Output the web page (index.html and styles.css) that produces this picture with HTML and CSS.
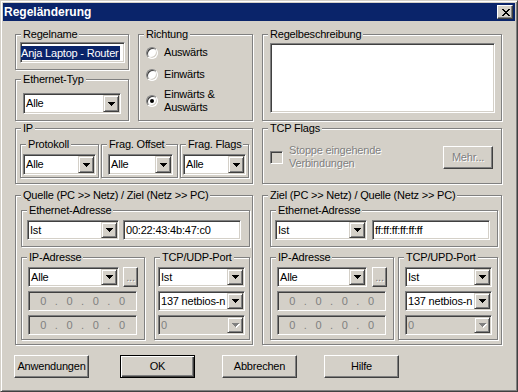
FILE: index.html
```html
<!DOCTYPE html>
<html lang="de">
<head>
    <meta charset="UTF-8">
    <link rel="stylesheet" href="styles.css">
</head>
<body>
<div class="window">
    <div class="titlebar">
        <span class="title">Regeländerung</span>
        <div class="close-btn">
            <svg width="8" height="7" viewBox="0 0 8 7" shape-rendering="crispEdges"><path d="M0 0h2v1H0zM6 0h2v1H6zM1 1h2v1H1zM5 1h2v1H5zM2 2h4v1H2zM3 3h2v1H3zM2 4h4v1H2zM1 5h2v1H1zM5 5h2v1H5zM0 6h2v1H0zM6 6h2v1H6z"/></svg>
        </div>
    </div>

    <div class="content">
        <!-- name, direction, description -->
        <div class="row">
            <div class="stack">
                <div class="group g-name">
                    <div class="group-title">Regelname</div>
                    <div class="edit e-name"><span class="sel">Anja Laptop - Router</span></div>
                </div>
                <div class="group g-ethtype">
                    <div class="group-title">Ethernet-Typ</div>
                    <div class="combo c-ethtype"><span class="combo-text">Alle</span><span class="drop"></span></div>
                </div>
            </div>
            <div class="group g-dir">
                <div class="group-title">Richtung</div>
                <div class="radio r-out"><span class="radio-dot"></span><span>Auswärts</span></div>
                <div class="radio r-in"><span class="radio-dot"></span><span>Einwärts</span></div>
                <div class="radio r-both"><span class="radio-dot checked"></span><span>Einwärts &amp;<br>Auswärts</span></div>
            </div>
            <div class="group g-desc">
                <div class="group-title">Regelbeschreibung</div>
                <div class="edit e-desc"></div>
            </div>
        </div>

        <!-- IP / TCP flags -->
        <div class="row row-ip">
            <div class="group g-ip">
                <div class="group-title">IP</div>
                <div class="ip-subs">
                    <div class="group g-proto">
                        <div class="group-title">Protokoll</div>
                        <div class="combo c-proto"><span class="combo-text">Alle</span><span class="drop"></span></div>
                    </div>
                    <div class="group g-offset">
                        <div class="group-title">Frag. Offset</div>
                        <div class="combo c-offset"><span class="combo-text">Alle</span><span class="drop"></span></div>
                    </div>
                    <div class="group g-flags">
                        <div class="group-title">Frag. Flags</div>
                        <div class="combo c-flags"><span class="combo-text">Alle</span><span class="drop"></span></div>
                    </div>
                </div>
            </div>
            <div class="group g-tcp">
                <div class="group-title">TCP Flags</div>
                <div class="tcp-row">
                    <span class="checkbox"></span>
                    <span class="disabled-text tcp-label">Stoppe eingehende<br>Verbindungen</span>
                    <div class="btn btn-more disabled-text">Mehr...</div>
                </div>
            </div>
        </div>

        <!-- source / destination -->
        <div class="row row-addr">
            <div class="group g-addr">
                <div class="group-title">Quelle (PC &gt;&gt; Netz) / Ziel (Netz &gt;&gt; PC)</div>
                <div class="group g-eth src">
                    <div class="group-title">Ethernet-Adresse</div>
                    <div class="eth-row">
                        <div class="combo c-eth"><span class="combo-text">Ist</span><span class="drop"></span></div>
                        <div class="edit e-mac">00:22:43:4b:47:c0</div>
                    </div>
                </div>
                <div class="sub-row src">
                    <div class="group g-ipaddr">
                        <div class="group-title">IP-Adresse</div>
                        <div class="ipaddr-row">
                            <div class="combo c-ipaddr"><span class="combo-text">Alle</span><span class="drop"></span></div>
                            <div class="btn btn-dots disabled-text">...</div>
                        </div>
                        <div class="ip-field"><span>0</span><i>.</i><span>0</span><i>.</i><span>0</span><i>.</i><span>0</span></div>
                        <div class="ip-field"><span>0</span><i>.</i><span>0</span><i>.</i><span>0</span><i>.</i><span>0</span></div>
                    </div>
                    <div class="group g-port">
                        <div class="group-title">TCP/UDP-Port</div>
                        <div class="combo c-port"><span class="combo-text">Ist</span><span class="drop"></span></div>
                        <div class="combo c-port"><span class="combo-text">137 netbios-n</span><span class="drop"></span></div>
                        <div class="combo c-port disabled"><span class="combo-text">0</span><span class="drop"></span></div>
                    </div>
                </div>
            </div>
            <div class="group g-addr dst">
                <div class="group-title">Ziel (PC &gt;&gt; Netz) / Quelle (Netz &gt;&gt; PC)</div>
                <div class="group g-eth">
                    <div class="group-title">Ethernet-Adresse</div>
                    <div class="eth-row">
                        <div class="combo c-eth"><span class="combo-text">Ist</span><span class="drop"></span></div>
                        <div class="edit e-mac">ff:ff:ff:ff:ff:ff</div>
                    </div>
                </div>
                <div class="sub-row">
                    <div class="group g-ipaddr">
                        <div class="group-title">IP-Adresse</div>
                        <div class="ipaddr-row">
                            <div class="combo c-ipaddr"><span class="combo-text">Alle</span><span class="drop"></span></div>
                            <div class="btn btn-dots disabled-text">...</div>
                        </div>
                        <div class="ip-field"><span>0</span><i>.</i><span>0</span><i>.</i><span>0</span><i>.</i><span>0</span></div>
                        <div class="ip-field"><span>0</span><i>.</i><span>0</span><i>.</i><span>0</span><i>.</i><span>0</span></div>
                    </div>
                    <div class="group g-port">
                        <div class="group-title">TCP/UPD-Port</div>
                        <div class="combo c-port"><span class="combo-text">Ist</span><span class="drop"></span></div>
                        <div class="combo c-port"><span class="combo-text">137 netbios-n</span><span class="drop"></span></div>
                        <div class="combo c-port disabled"><span class="combo-text">0</span><span class="drop"></span></div>
                    </div>
                </div>
            </div>
        </div>

        <div class="buttons">
            <div class="btn btn-main">Anwendungen</div>
            <div class="btn btn-main btn-default">OK</div>
            <div class="btn btn-main">Abbrechen</div>
            <div class="btn btn-main">Hilfe</div>
        </div>
    </div>
</div>
</body>
</html>
```

FILE: styles.css
```css
* {
    box-sizing: border-box;
}
body {
    margin: 0;
    background: #d4d0c8;
    font-family: "Liberation Sans", Arial, sans-serif;
    font-size: 11px;
    letter-spacing: -0.2px;
    line-height: 13px;
    color: #000;
}

/* window frame */
.window {
    width: 518px;
    height: 392px;
    padding: 2px;
    background: #d4d0c8;
    border: 1px solid;
    border-color: #d4d0c8 #404040 #404040 #d4d0c8;
    box-shadow: inset 1px 1px #fff, inset -1px -1px #808080;
}
.titlebar {
    height: 18px;
    padding: 0 2px 0 1px;
    background: #0a246a;
    display: flex;
    align-items: center;
    justify-content: space-between;
}
.title {
    color: #fff;
    font-weight: bold;
    font-size: 12px;
    letter-spacing: 0;
}
.close-btn {
    width: 16px;
    height: 14px;
    background: #d4d0c8;
    border: 1px solid;
    border-color: #fff #404040 #404040 #fff;
    box-shadow: inset -1px -1px #808080;
    display: flex;
    align-items: center;
    justify-content: center;
    padding-left: 1px;
}

.content {
    padding: 13px 0 0 12px;
}
.row {
    display: flex;
    align-items: flex-start;
}
.row-ip {
    margin-top: 7px;
}
.row-addr {
    margin-top: 11px;
}

/* etched group boxes */
.group {
    border: 1px solid #808080;
    box-shadow: inset 1px 1px #fff, 1px 1px #fff;
}
.group-title {
    width: max-content;
    height: 13px;
    margin: -7px 0 0 5px;
    padding: 0 2px;
    background: #d4d0c8;
    white-space: nowrap;
}

/* sunken controls */
.edit, .combo, .ip-field {
    border: 1px solid;
    border-color: #808080 #fff #fff #808080;
    box-shadow: inset 1px 1px #404040, inset -1px -1px #d4d0c8;
    padding: 1px;
    background: #fff;
    display: flex;
    align-items: center;
    white-space: nowrap;
}
.edit {
    padding: 1px 2px;
}
.combo {
    height: 20px;
}
.combo-text {
    flex: 1;
    overflow: hidden;
    padding-left: 1px;
}
.drop {
    width: 16px;
    align-self: stretch;
    flex-shrink: 0;
    background: #d4d0c8;
    border: 1px solid;
    border-color: #d4d0c8 #404040 #404040 #d4d0c8;
    box-shadow: inset 1px 1px #fff, inset -1px -1px #808080;
    display: flex;
    align-items: center;
    justify-content: center;
}
.drop::after {
    content: "";
    width: 7px;
    height: 4px;
    margin-left: 1px;
    background:
        linear-gradient(#000, #000) 0 0 / 7px 1px no-repeat,
        linear-gradient(#000, #000) 1px 1px / 5px 1px no-repeat,
        linear-gradient(#000, #000) 2px 2px / 3px 1px no-repeat,
        linear-gradient(#000, #000) 3px 3px / 1px 1px no-repeat;
}
.combo.disabled {
    background: #d4d0c8;
    color: #808080;
}
.combo.disabled .drop::after {
    background:
        linear-gradient(#808080, #808080) 0 0 / 7px 1px no-repeat,
        linear-gradient(#808080, #808080) 1px 1px / 5px 1px no-repeat,
        linear-gradient(#808080, #808080) 2px 2px / 3px 1px no-repeat,
        linear-gradient(#808080, #808080) 3px 3px / 1px 1px no-repeat;
    filter: drop-shadow(1px 1px 0 #fff);
}

/* raised buttons */
.btn {
    background: #d4d0c8;
    border: 1px solid;
    border-color: #fff #404040 #404040 #fff;
    box-shadow: inset -1px -1px #808080;
    display: flex;
    align-items: center;
    justify-content: center;
    white-space: nowrap;
}
.disabled-text {
    color: #808080;
    text-shadow: 1px 1px #fff;
}
.btn-main {
    width: 75px;
    height: 23px;
    margin-left: 27px;
}
.btn-main:first-child {
    margin-left: 0;
}
.btn-default {
    margin-left: 31px;
    border-color: #000;
    box-shadow: inset 1px 1px #fff, inset -1px -1px #404040, inset -2px -2px #808080;
}
.buttons {
    display: flex;
    margin: 10px 0 0 -1px;
}

/* row 1 */
.stack {
    width: 114px;
    margin-right: 9px;
}
.g-name {
    height: 36px;
}
.e-name {
    width: 105px;
    height: 21px;
    margin: 1px 0 0 4px;
    padding: 1px 0;
}
.sel {
    background: #0a246a;
    color: #fff;
    line-height: 14px;
    height: 14px;
    padding-right: 1px;
}
.g-ethtype {
    height: 42px;
    margin-top: 9px;
}
.c-ethtype {
    width: 98px;
    height: 21px;
    margin: 7px 0 0 7px;
}
.g-dir {
    width: 115px;
    height: 87px;
    margin-right: 9px;
}
.radio {
    display: flex;
    align-items: center;
    margin-left: 7px;
}
.r-out {
    margin-top: 5px;
}
.r-in {
    margin-top: 9px;
}
.r-both {
    margin-top: 7px;
}
.radio-dot {
    width: 12px;
    height: 12px;
    margin-right: 6px;
    border-radius: 50%;
    border: 1px solid;
    border-color: #808080 #fff #fff #808080;
    box-shadow: inset 1px 1px #404040, inset -1px -1px #d4d0c8;
    background: #fff;
    display: flex;
    align-items: center;
    justify-content: center;
    flex-shrink: 0;
}
.radio-dot.checked::after {
    content: "";
    width: 4px;
    height: 4px;
    border-radius: 50%;
    background: #000;
}
.g-desc {
    width: 240px;
    height: 87px;
}
.e-desc {
    width: 225px;
    height: 70px;
    margin: 2px 0 0 7px;
}

/* row 2 */
.g-ip {
    width: 238px;
    height: 56px;
    margin-right: 9px;
}
.ip-subs {
    display: flex;
    margin: 9px 0 0 4px;
}
.g-proto {
    width: 79px;
    height: 34px;
}
.g-offset {
    width: 77px;
    height: 34px;
    margin-left: 2px;
}
.g-flags {
    width: 69px;
    height: 34px;
    margin-left: 2px;
}
.c-proto, .c-offset, .c-flags {
    height: 21px;
    margin: 3px 0 0 2px;
}
.c-proto {
    width: 73px;
}
.c-offset {
    width: 65px;
    margin-left: 6px;
}
.c-flags {
    width: 63px;
}
.g-tcp {
    width: 240px;
    height: 56px;
}
.tcp-row {
    display: flex;
    align-items: center;
    height: 26px;
    margin-top: 9px;
}
.checkbox {
    width: 13px;
    height: 13px;
    margin-left: 7px;
    border: 1px solid;
    border-color: #808080 #fff #fff #808080;
    box-shadow: inset 1px 1px #404040, inset -1px -1px #d4d0c8;
    background: #d4d0c8;
}
.tcp-label {
    margin-left: 6px;
}
.btn-more {
    width: 50px;
    height: 23px;
    margin: 0 8px 0 auto;
}

/* row 3 */
.g-addr {
    width: 238px;
    height: 150px;
    margin-right: 9px;
}
.g-addr.dst {
    width: 240px;
    margin-right: 0;
}
.g-eth {
    width: 228px;
    height: 37px;
    margin: 8px 0 0 7px;
}
.g-eth.src {
    width: 229px;
    margin-left: 5px;
}
.eth-row {
    display: flex;
    margin: 3px 0 0 4px;
}
.src .eth-row {
    margin-left: 5px;
}
.c-eth {
    width: 92px;
}
.e-mac {
    width: 118px;
    height: 20px;
    margin-left: 5px;
}
.src .e-mac {
    margin-left: 4px;
}
.sub-row {
    display: flex;
    margin: 10px 0 0 7px;
}
.sub-row.src {
    margin-left: 5px;
}
.g-ipaddr {
    width: 124px;
    height: 83px;
}
.ipaddr-row {
    display: flex;
    margin: 3px 0 0 6px;
}
.c-ipaddr {
    width: 90px;
}
.src .c-ipaddr {
    width: 91px;
}
.btn-dots {
    width: 15px;
    height: 20px;
    margin-left: 5px;
    align-items: flex-end;
    padding-bottom: 2px;
}
.src .btn-dots {
    margin-left: 4px;
}
.ip-field {
    width: 109px;
    height: 20px;
    margin: 4px 0 0 6px;
    padding: 1px 3px;
    background: #d4d0c8;
    color: #808080;
}
.ip-field span {
    flex: 1;
    text-align: center;
}
.ip-field i {
    font-style: normal;
    width: 4px;
    text-align: center;
}
.g-port {
    width: 100px;
    height: 83px;
    margin-left: 4px;
}
.src .g-port {
    width: 96px;
    margin-left: 9px;
}
.c-port {
    width: 87px;
    margin: 4px 0 0 6px;
}
.c-port:nth-child(2) {
    margin-top: 3px;
}
.src .c-port {
    margin-left: 3px;
}
```
